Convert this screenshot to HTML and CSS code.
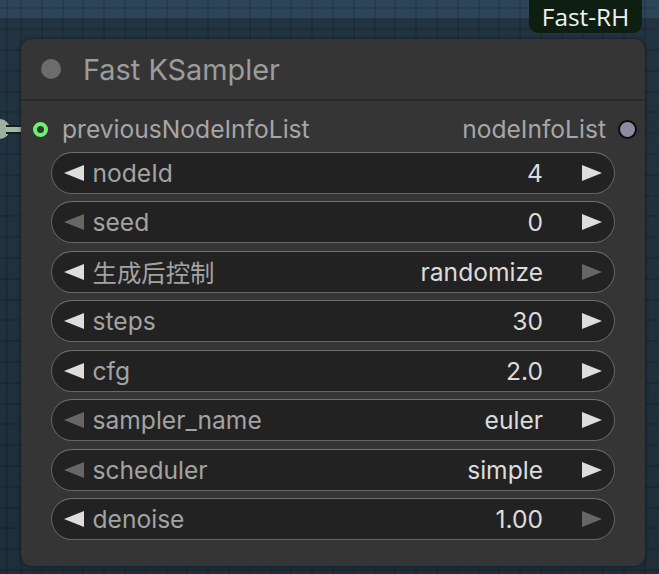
FILE: index.html
```html
<!DOCTYPE html>
<html>
<head>
<meta charset="utf-8">
<link rel="stylesheet" href="styles.css">
</head>
<body>
<div class="canvas">
  <div class="badge">Fast-RH</div>
  <div class="link"><span class="link-end"></span><span class="link-line"></span></div>
  <div class="node">
    <div class="title">
      <span class="title-dot"></span>
      <span class="title-text">Fast KSampler</span>
    </div>
    <div class="slots">
      <div class="slot-in"><span class="in-dot"></span><span class="slot-label">previousNodeInfoList</span></div>
      <div class="slot-out"><span class="slot-label">nodeInfoList</span><span class="out-dot"></span></div>
    </div>
    <div class="widgets">
      <div class="widget"><span class="arr-l on"></span><span class="w-label">nodeId</span><span class="w-value">4</span><span class="arr-r on"></span></div>
      <div class="widget"><span class="arr-l off"></span><span class="w-label">seed</span><span class="w-value">0</span><span class="arr-r on"></span></div>
      <div class="widget"><span class="arr-l on"></span><span class="w-label cjk">生成后控制</span><span class="w-value">randomize</span><span class="arr-r off"></span></div>
      <div class="widget"><span class="arr-l on"></span><span class="w-label">steps</span><span class="w-value">30</span><span class="arr-r on"></span></div>
      <div class="widget"><span class="arr-l on"></span><span class="w-label">cfg</span><span class="w-value">2.0</span><span class="arr-r on"></span></div>
      <div class="widget"><span class="arr-l off"></span><span class="w-label">sampler_name</span><span class="w-value">euler</span><span class="arr-r on"></span></div>
      <div class="widget"><span class="arr-l off"></span><span class="w-label">scheduler</span><span class="w-value">simple</span><span class="arr-r on"></span></div>
      <div class="widget"><span class="arr-l on"></span><span class="w-label">denoise</span><span class="w-value">1.00</span><span class="arr-r off"></span></div>
    </div>
  </div>
</div>
</body>
</html>
```
FILE: styles.css
```css
html, body {
  margin: 0;
  padding: 0;
}
body {
  width: 659px;
  height: 574px;
  overflow: hidden;
  font-family: Inter, "Noto Sans CJK SC", sans-serif;
  background-color: #1f2e39;
}
.canvas {
  position: relative;
  width: 659px;
  height: 574px;
  overflow: hidden;
  background-image:
    repeating-linear-gradient(90deg, rgba(0,0,0,0.12) 0 2px, transparent 2px 20.8px),
    repeating-linear-gradient(0deg, rgba(0,0,0,0.12) 0 2px, transparent 2px 20.8px),
    linear-gradient(180deg, #2d4559 0, #2d4559 18px, #223341 18px, #1f2e39 100%);
  background-position: 20px 0, 0 -3px, 0 0;
  padding-top: 39px;
  box-sizing: border-box;
}
.badge {
  position: absolute;
  top: 0;
  left: 529px;
  width: 113px;
  height: 33px;
  background: #0e1e10;
  border-radius: 0 0 9px 9px;
  color: #f2f2f2;
  font-family: "Open Sans", "Noto Sans", sans-serif;
  font-size: 24.4px;
  line-height: 33px;
  text-align: center;
}
.link {
  position: absolute;
  left: -11px;
  top: 119px;
  display: flex;
  align-items: center;
}
.link-end {
  width: 21px;
  height: 20px;
  border-radius: 50%;
  background: #9fb09f;
}
.link-line {
  width: 16px;
  height: 5px;
  margin-left: -4px;
  background: #a7b8a6;
  border-top: 2px solid #1a1f1a;
  border-bottom: 2px solid #1a1f1a;
}
.node {
  margin-left: 21px;
  width: 624px;
  height: 527px;
  background: #353535;
  border-radius: 11px;
  box-shadow: 0 0 4px rgba(0,0,0,0.45);
  position: relative;
}
.title {
  height: 60px;
  display: flex;
  align-items: center;
  padding-left: 20px;
  border-bottom: 2px solid #2a2a2a;
}
.title-dot {
  width: 20px;
  height: 20px;
  border-radius: 50%;
  background: #6c6c6c;
}
.title-text {
  margin-left: 22px;
  color: #9c9c9c;
  font-size: 28.9px;
}
.slots {
  height: 36px;
  margin-top: 10px;
  display: flex;
  align-items: center;
  justify-content: space-between;
  padding: 0 8px 0 12px;
}
.slot-in, .slot-out {
  display: flex;
  align-items: center;
}
.slot-label {
  color: #a6a6a6;
  font-size: 24.6px;
}
.in-dot {
  width: 7px;
  height: 7px;
  border: 4px solid #6cf26c;
  background: #303a30;
  border-radius: 50%;
  margin-right: 14px;
}
.out-dot {
  width: 15px;
  height: 15px;
  border: 2px solid #0c0c0c;
  background: #8c8ca0;
  border-radius: 50%;
  margin-left: 12px;
}
.widgets {
  padding: 5px 30px 0 30px;
  display: flex;
  flex-direction: column;
  gap: 7.45px;
}
.widget {
  height: 42px;
  box-sizing: border-box;
  border: 1.5px solid #666;
  border-top-color: #707070;
  border-radius: 21px;
  background: #222222;
  display: flex;
  align-items: center;
  padding: 0 12px 0 11.5px;
}
.arr-l {
  width: 0;
  height: 0;
  border-top: 8.5px solid transparent;
  border-bottom: 8.5px solid transparent;
  border-right: 20px solid #dddddd;
}
.arr-r {
  width: 0;
  height: 0;
  border-top: 8.5px solid transparent;
  border-bottom: 8.5px solid transparent;
  border-left: 20px solid #dddddd;
}
.arr-l.off { border-right-color: #666666; }
.arr-r.off { border-left-color: #666666; }
.w-label {
  margin-left: 9px;
  color: #a3a3a3;
  font-size: 24.6px;
}
.w-label.cjk {
  font-family: "Noto Sans CJK SC", sans-serif;
  font-size: 24.4px;
}
.w-value {
  margin-left: auto;
  margin-right: 39px;
  color: #dcdcdc;
  font-size: 24.6px;
}
```
